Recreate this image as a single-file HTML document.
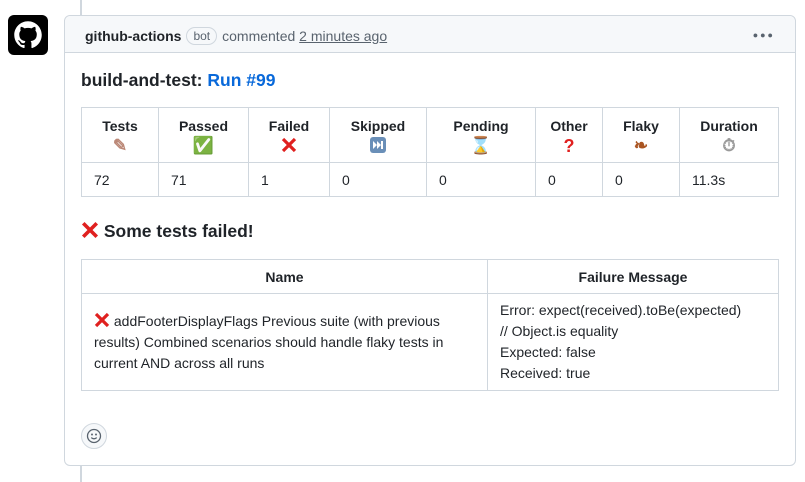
<!DOCTYPE html>
<html><head><meta charset="utf-8"><style>
*{box-sizing:border-box;margin:0;padding:0}
body{width:805px;height:482px;background:#fff;font-family:"Liberation Sans",Helvetica,Arial,sans-serif;color:#1f2328;font-size:14px;position:relative;overflow:hidden}
.line{position:absolute;left:80px;top:0;width:2px;height:482px;background:#d0d7de}
.av{position:absolute;left:8px;top:15px;width:40px;height:40px;background:#000;border-radius:6px}
.box{position:absolute;left:64px;top:15px;width:732px;height:451px;border:1px solid #d0d7de;border-radius:6px;background:#fff}
.hdr{height:37px;background:#f6f8fa;border-bottom:1px solid #d0d7de;border-radius:6px 6px 0 0;padding:3px 0 0 20px;display:flex;align-items:center;color:#59636e}
.hdr b{color:#1f2328;font-weight:bold}
.bot{border:1px solid #d0d7de;border-radius:10px;font-size:12px;padding:1px 6px;margin:0 5px}
.dots{position:absolute;right:20px;top:14px;font-size:9px;letter-spacing:2px;color:#59636e}
h3{position:absolute;left:16px;top:54px;font-size:17.5px;font-weight:bold}
h3 a{color:#0969da}
table{position:absolute;border-collapse:collapse;font-size:14px}
td,th{border:1px solid #d0d7de}
.t1{left:16px;top:91px;width:698px}
.t1 th{height:55px;text-align:center;font-weight:bold;line-height:20px;vertical-align:top;padding-top:8px}
.t1 td{height:34px;padding-left:12px}
.e{font-size:17px;display:block;line-height:20px}
h4{position:absolute;left:16px;top:205px;font-size:17.5px;font-weight:bold}
.x{color:#e0201f;font-weight:bold}
.t2{left:16px;top:243px;width:698px}
.t2 th{height:34px;font-weight:bold}
.t2 td{height:97px;padding:0 12px;line-height:21px}
.sm{position:absolute;left:16px;top:407px;width:26px;height:26px;border:1px solid #d0d7de;border-radius:50%;background:#f6f8fa;display:flex;align-items:center;justify-content:center}
.rx{display:inline-block;vertical-align:-2px}
</style></head><body>
<div class="line"></div>
<div class="av"><svg width="40" height="40" viewBox="0 0 16 16"><path transform="translate(2.5 2.5) scale(0.6875)" fill="#fff" d="M8 0C3.580 0 0 3.58 0 8c0 3.54 2.29 6.53 5.47 7.59.4.07.55-.17.55-.38 0-.19-.01-.82-.01-1.49-2.01.37-2.530-.49-2.69-.94-.09-.23-.48-.94-.82-1.13-.28-.15-.68-.52-.01-.53.63-.01 1.08.58 1.23.82.72 1.21 1.87.87 2.33.66.07-.52.28-.87.51-1.07-1.78-.2-3.64-.89-3.64-3.95 0-.87.31-1.59.82-2.15-.08-.2-.36-1.02.08-2.12 0 0 .67-.21 2.2.82.64-.18 1.32-.27 2-.27.68 0 1.36.09 2 .27 1.53-1.04 2.2-.82 2.2-.82.44 1.1.16 1.92.08 2.12.51.56.82 1.27.82 2.15 0 3.07-1.87 3.75-3.65 3.95.29.25.54.73.54 1.48 0 1.07-.01 1.93-.01 2.2 0 .21.15.46.55.38A8.013 8.013 0 0016 8c0-4.42-3.58-8-8-8z"/></svg></div>
<div class="box">
<div class="hdr"><b>github-actions</b><span class="bot">bot</span>commented&nbsp;<u>2 minutes ago</u></div>
<div class="dots">●●●</div>
<h3>build-and-test: <a>Run #99</a></h3>
<table class="t1"><tr>
<th style="width:77px">Tests<span class="e" style="color:#b87">✎</span></th>
<th style="width:90px">Passed<span class="e" style="color:#3a3">✅</span></th>
<th style="width:81px">Failed<span class="e"><svg class="rx" width="16" height="16" viewBox="0 0 16 16"><path d="M2 2L14 14M14 2L2 14" stroke="#e0201f" stroke-width="3.2"/></svg></span></th>
<th style="width:97px">Skipped<span class="e"><svg class="rx" width="16" height="16" viewBox="0 0 16 16"><rect width="16" height="16" rx="3" fill="#6a8fb8"/><path d="M3 4l4 4-4 4zM7 4l4 4-4 4z" fill="#fff"/><rect x="11" y="4" width="2" height="8" fill="#fff"/></svg></span></th>
<th style="width:109px">Pending<span class="e" style="color:#a63">⌛</span></th>
<th style="width:67px">Other<span class="e x" style="font-size:18px">?</span></th>
<th style="width:77px">Flaky<span class="e" style="color:#a52">❧</span></th>
<th>Duration<span class="e" style="color:#999">⏱</span></th>
</tr><tr><td>72</td><td>71</td><td>1</td><td>0</td><td>0</td><td>0</td><td>0</td><td>11.3s</td></tr></table>
<h4><svg class="rx" width="18" height="18" viewBox="0 0 16 16"><path d="M2 2L14 14M14 2L2 14" stroke="#e0201f" stroke-width="3.2"/></svg> Some tests failed!</h4>
<table class="t2"><tr><th style="width:406px">Name</th><th>Failure Message</th></tr>
<tr><td><svg class="rx" width="16" height="16" viewBox="0 0 16 16"><path d="M2 2L14 14M14 2L2 14" stroke="#e0201f" stroke-width="3.2"/></svg> addFooterDisplayFlags Previous suite (with previous results) Combined scenarios should handle flaky tests in current AND across all runs</td>
<td>Error: expect(received).toBe(expected)<br>// Object.is equality<br>Expected: false<br>Received: true</td></tr></table>
<div class="sm"><svg width="16" height="16" viewBox="0 0 16 16" fill="none" stroke="#59636e" stroke-width="1.3"><circle cx="8" cy="8" r="6.5"/><path d="M5.3 9.6c1.4 1.6 4 1.6 5.4 0"/><circle cx="6" cy="6.5" r=".4" fill="#59636e"/><circle cx="10" cy="6.5" r=".4" fill="#59636e"/></svg></div>
</div>
</body></html>
